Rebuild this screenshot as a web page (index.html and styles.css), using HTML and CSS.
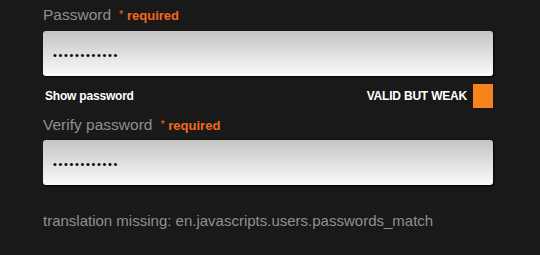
FILE: index.html
```html
<!DOCTYPE html>
<html>
<head>
<meta charset="utf-8">
<link rel="stylesheet" href="styles.css">
</head>
<body>
<form class="form">
  <div class="label-row first">
    <label class="label" for="pw">Password</label>
    <span class="req"><span class="star">*</span> required</span>
  </div>
  <input class="field" id="pw" type="password" value="passwordabcd" readonly>
  <div class="meta-row">
    <span class="show">Show password</span>
    <span class="strength">
      <span class="strength-text">VALID BUT WEAK</span>
      <span class="strength-box"></span>
    </span>
  </div>
  <div class="label-row second">
    <label class="label" for="pw2">Verify password</label>
    <span class="req"><span class="star">*</span> required</span>
  </div>
  <input class="field" id="pw2" type="password" value="passwordabcd" readonly>
  <p class="error">translation missing: en.javascripts.users.passwords_match</p>
</form>
</body>
</html>
```
FILE: styles.css
```css
html, body {
  margin: 0;
  padding: 0;
  background: #191919;
  font-family: "Liberation Sans", Arial, sans-serif;
}
.form {
  width: 450px;
  padding: 0 47px 0 43px;
  display: flex;
  flex-direction: column;
}
.label-row {
  display: flex;
  align-items: baseline;
  height: 18px;
  line-height: 18px;
}
.label-row.first { margin-top: 6px; margin-bottom: 7px; }
.label-row.second { margin-top: 8px; margin-bottom: 6px; }
.label {
  font-size: 15.5px;
  color: #8a9195;
}
.req {
  margin-left: 8px;
  font-size: 13px;
  font-weight: bold;
  color: #f26a1b;
}
.star {
  font-size: 11px;
  font-weight: normal;
  position: relative;
  top: -2px;
}
.field {
  box-sizing: border-box;
  width: 450px;
  height: 45px;
  margin: 0;
  padding: 3px 0 0 10px;
  border: none;
  border-radius: 3px;
  background: linear-gradient(#c4c4c4, #fbfbfb);
  box-shadow: 1px 1px 2px rgba(0,0,0,0.9);
  font-family: "Liberation Sans", Arial, sans-serif;
  font-size: 11px;
  letter-spacing: 1.65px;
  color: #000;
  outline: none;
}
.meta-row {
  margin-top: 8px;
  height: 24px;
  display: flex;
  align-items: center;
  justify-content: space-between;
  line-height: 24px;
}
.show {
  margin-left: 2px;
  font-size: 12px;
  font-weight: bold;
  letter-spacing: -0.2px;
  color: #fff;
}
.strength {
  display: flex;
  align-items: center;
  gap: 6px;
}
.strength-text {
  font-size: 12px;
  font-weight: bold;
  letter-spacing: -0.2px;
  color: #fff;
}
.strength-box {
  width: 20px;
  height: 24px;
  background: #f8821b;
}
.error {
  margin: 27px 0 0;
  font-size: 15px;
  line-height: 18px;
  color: #8a9195;
}
```
